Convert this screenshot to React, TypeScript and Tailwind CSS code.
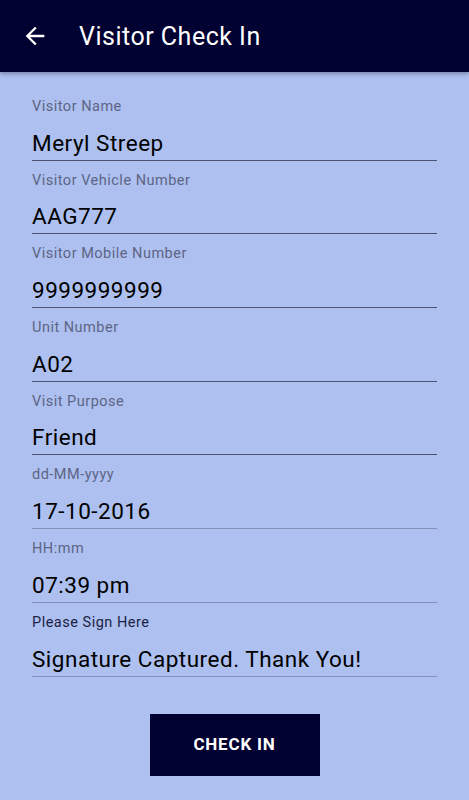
const fields = [
  { label: "Visitor Name", value: "Meryl Streep", dark: true },
  { label: "Visitor Vehicle Number", value: "AAG777", dark: true },
  { label: "Visitor Mobile Number", value: "9999999999", dark: true },
  { label: "Unit Number", value: "A02", dark: true },
  { label: "Visit Purpose", value: "Friend", dark: true },
  { label: "dd-MM-yyyy", value: "17-10-2016", dark: false },
  { label: "HH:mm", value: "07:39 pm", dark: false },
  { label: "Please Sign Here", value: "Signature Captured. Thank You!", dark: false, strongLabel: true },
];

function BackArrow() {
  return (
    <svg width="28" height="28" viewBox="0 0 24 24" fill="#ffffff">
      <path d="M20 11H7.83l5.59-5.59L12 4l-8 8 8 8 1.41-1.41L7.83 13H20v-2z" />
    </svg>
  );
}

export default function App() {
  return (
    <div className="min-h-screen w-[469px] bg-[#adc0ef] font-['Roboto','Liberation_Sans',sans-serif]">
      {/* Toolbar */}
      <header className="h-[72px] bg-[#010132] flex items-center shadow-[0_2px_4px_rgba(0,0,0,0.3)]">
        <div className="ml-[21px] flex items-center">
          <BackArrow />
        </div>
        <h1 className="ml-[30px] text-[25px] tracking-[0.5px] text-white leading-none">Visitor Check In</h1>
      </header>

      {/* Form */}
      <main className="pt-[15px] px-[32px]">
        {fields.map((f) => (
          <div key={f.label} className="pt-[10px]">
            <div
              className={
                f.strongLabel
                  ? "text-[14.5px] tracking-[0.5px] leading-5 text-[#1c1f45]"
                  : "text-[14.5px] tracking-[0.5px] leading-5 text-[#5d6586]"
              }
            >
              {f.label}
            </div>
            <div className="mt-[10.7px] text-[22.5px] tracking-[0.5px] leading-[30px] text-black">{f.value}</div>
            <div className={f.dark ? "mt-[2px] h-px bg-[#4c5272]" : "mt-[2px] h-px bg-[#8490b8]"} />
          </div>
        ))}

        <div className="flex justify-center pt-[37px]">
          <button className="w-[170px] h-[62px] bg-[#010132] text-white font-bold text-[17px] tracking-[0.8px]">
            CHECK IN
          </button>
        </div>
      </main>
    </div>
  );
}
